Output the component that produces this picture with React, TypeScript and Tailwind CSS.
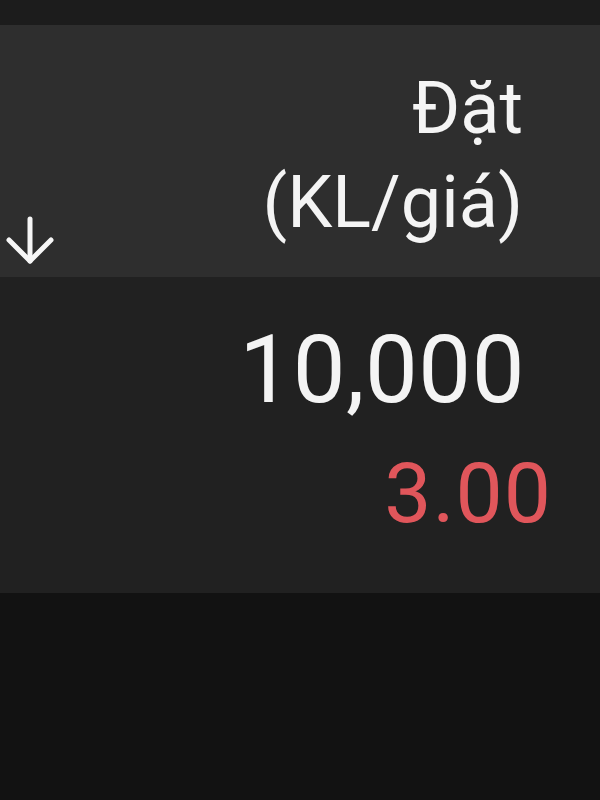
import React from "react";

export default function App() {
  return (
    <div
      className="w-[600px] h-[800px] flex flex-col bg-[#121212] text-[#f4f4f4]"
      style={{ fontFamily: "Roboto, 'Noto Sans', sans-serif" }}
    >
      <div className="h-[25px] bg-[#1c1c1c]" />
      <div className="h-[252px] bg-[#2e2e2e] flex">
        <div className="self-end pl-[6px] pb-[13px]">
          <svg
            width="48"
            height="48"
            viewBox="0 0 48 48"
            fill="none"
            stroke="#f6f6f6"
            strokeWidth="5"
            strokeLinecap="round"
            strokeLinejoin="round"
          >
            <path d="M24 3 V45" />
            <path d="M3 24 L24 45 L45 24" />
          </svg>
        </div>
        <div className="ml-auto pt-[37px] pr-[77px] text-right text-[72px] leading-[94px]">
          <div>Đặt</div>
          <div>(KL/giá)</div>
        </div>
      </div>
      <div className="h-[316px] bg-[#212121] flex flex-col items-end">
        <div className="pt-[46px] pr-[75px] text-[94px] leading-[94px] tracking-[0.5px]">10,000</div>
        <div className="pt-[35px] pr-[48px] text-[84px] leading-[84px] tracking-[1px] text-[#e0565b]">3.00</div>
      </div>
    </div>
  );
}
